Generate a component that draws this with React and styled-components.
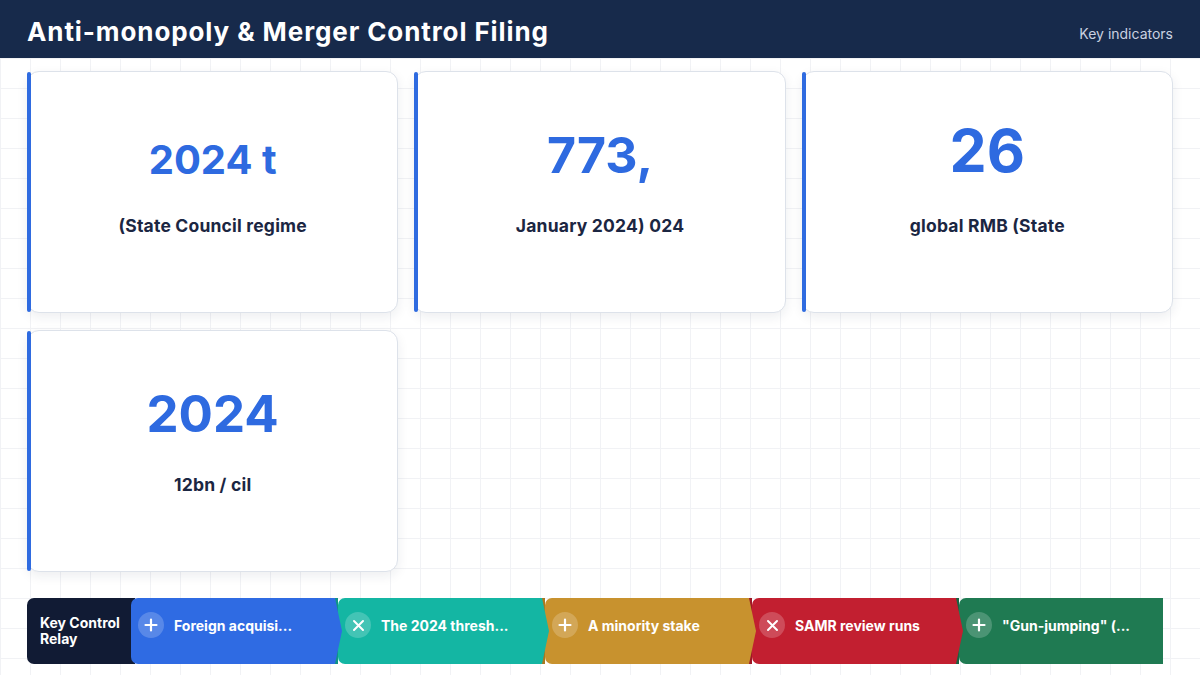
import React from "react"
import styled, { createGlobalStyle } from 'styled-components';

const GlobalStyle = createGlobalStyle`
  html, body {
    margin: 0;
    padding: 0;
    background: #ffffff;
    font-family: Inter, "Noto Sans", "Liberation Sans", sans-serif;
  }
  * { box-sizing: border-box; }
`;

const Page = styled.div`
  width: 1200px;
  height: 675px;
  overflow: hidden;
  display: flex;
  flex-direction: column;
  background-color: #ffffff;
  background-image:
    linear-gradient(to right, #f1f2f5 1px, transparent 1px),
    linear-gradient(to bottom, #f1f2f5 1px, transparent 1px);
  background-size: 30px 30px;
  background-position: 0 -2px;
`;

const Header = styled.header`
  height: 58px;
  flex-shrink: 0;
  background: #172a4b;
  display: flex;
  align-items: center;
  justify-content: space-between;
  padding: 5px 27px 0;
`;

const Title = styled.h1`
  margin: 0;
  color: #ffffff;
  font-size: 26px;
  font-weight: 700;
  letter-spacing: 0.9px;
`;

const Tag = styled.span`
  color: #c9d1e0;
  font-size: 14px;
  margin-top: 3px;
`;

const Body = styled.main`
  flex: 1;
  display: flex;
  flex-direction: column;
  justify-content: space-between;
  padding: 13px 27px 11px;
`;

const CardGrid = styled.div`
  display: grid;
  grid-template-columns: repeat(3, 1fr);
  grid-auto-rows: 242px;
  column-gap: 16px;
  row-gap: 17px;
`;

const Card = styled.div`
  position: relative;
  background: #ffffff;
  border: 1px solid #dde2ea;
  border-radius: 12px;
  box-shadow: 0 4px 12px rgba(20, 35, 70, 0.08);
  display: flex;
  flex-direction: column;
  align-items: center;
  padding-top: 38px;

  &::before {
    content: '';
    position: absolute;
    left: -1px;
    top: 0;
    bottom: 0;
    width: 4px;
    border-radius: 2px;
    background: #2f6be0;
  }
`;

const Value = styled.div`
  height: 70px;
  display: flex;
  align-items: flex-end;
  color: #2e6ae0;
  font-size: ${p => p.$size}px;
  font-weight: 700;
  line-height: 1;
`;

const Caption = styled.div`
  margin-top: 35px;
  color: #1b2642;
  font-size: 17.5px;
  line-height: 22px;
  font-weight: 700;
  letter-spacing: 0.2px;
`;

const Relay = styled.div`
  display: flex;
  height: 66px;
`;

const RelayLabel = styled.div`
  width: 108px;
  flex-shrink: 0;
  background: #111b34;
  color: #ffffff;
  border-radius: 7px 0 0 7px;
  font-size: 14px;
  font-weight: 700;
  line-height: 16px;
  padding: 0 0 0 13px;
  display: flex;
  align-items: center;
`;

const Step = styled.div`
  position: relative;
  width: 204px;
  flex-shrink: 0;
  margin-left: ${p => p.$first ? '-4px' : '3px'};
  background: ${p => p.$color};
  border-radius: 7px 0 0 7px;
  display: flex;
  align-items: center;
  gap: 10px;
  padding: 0 0 12px 7px;
  color: #ffffff;
  font-size: 14px;
  font-weight: 700;
  white-space: nowrap;
  z-index: ${p => p.$z};

  &::before {
    content: ${p => p.$first ? 'none' : "''"};
    position: absolute;
    left: -6px;
    top: 0;
    bottom: 0;
    width: 6px;
    background: ${p => p.$edge};
  }

  &::after {
    content: ${p => p.$last ? 'none' : "''"};
    position: absolute;
    right: -7px;
    top: 0;
    bottom: 0;
    width: 7px;
    background: ${p => p.$color};
    clip-path: polygon(0 0, 100% 50%, 0 100%);
    z-index: 3;
  }
`;

const StepIcon = styled.span`
  width: 26px;
  height: 26px;
  border-radius: 50%;
  background: rgba(255, 255, 255, 0.2);
  display: flex;
  align-items: center;
  justify-content: center;
  flex-shrink: 0;
`;

const PlusIcon = () => (
  <svg width="14" height="14" viewBox="0 0 14 14">
    <path d="M7 1.5v11M1.5 7h11" stroke="#fff" strokeWidth="2.2" strokeLinecap="round" />
  </svg>
);

const CrossIcon = () => (
  <svg width="13" height="13" viewBox="0 0 13 13">
    <path d="M2 2l9 9M11 2l-9 9" stroke="#fff" strokeWidth="2" strokeLinecap="round" />
  </svg>
);

const cards = [
  { value: "2024 t", size: 40, caption: "(State Council regime" },
  { value: "773,", size: 50, caption: "January 2024) 024" },
  { value: "26", size: 59, caption: "global RMB (State" },
  { value: "2024", size: 51, caption: "12bn / cil" },
];

const steps = [
  { text: "Foreign acquisi...", icon: "plus", color: "#2f6be3", edge: "#2f6be3" },
  { text: "The 2024 thresh...", icon: "cross", color: "#14b6a3", edge: "#0f9486" },
  { text: "A minority stake", icon: "plus", color: "#c8922e", edge: "#a97820" },
  { text: "SAMR review runs", icon: "cross", color: "#c21f30", edge: "#9e1826" },
  { text: "\"Gun-jumping\" (...", icon: "plus", color: "#1f7a52", edge: "#186442" },
];

const App = () => {
  return (
    <Page>
      <GlobalStyle />
      <Header>
        <Title>Anti-monopoly &amp; Merger Control Filing</Title>
        <Tag>Key indicators</Tag>
      </Header>
      <Body>
        <CardGrid>
          {cards.map((c, i) => (
            <Card key={i}>
              <Value $size={c.size}>{c.value}</Value>
              <Caption>{c.caption}</Caption>
            </Card>
          ))}
        </CardGrid>
        <Relay>
          <RelayLabel>Key Control<br />Relay</RelayLabel>
          {steps.map((s, i) => (
            <Step
              key={i}
              $color={s.color}
              $edge={s.edge}
              $first={i === 0}
              $last={i === steps.length - 1}
              $z={10 - i}
            >
              <StepIcon>{s.icon === "plus" ? <PlusIcon /> : <CrossIcon />}</StepIcon>
              {s.text}
            </Step>
          ))}
        </Relay>
      </Body>
    </Page>
  );
}
export default App;
